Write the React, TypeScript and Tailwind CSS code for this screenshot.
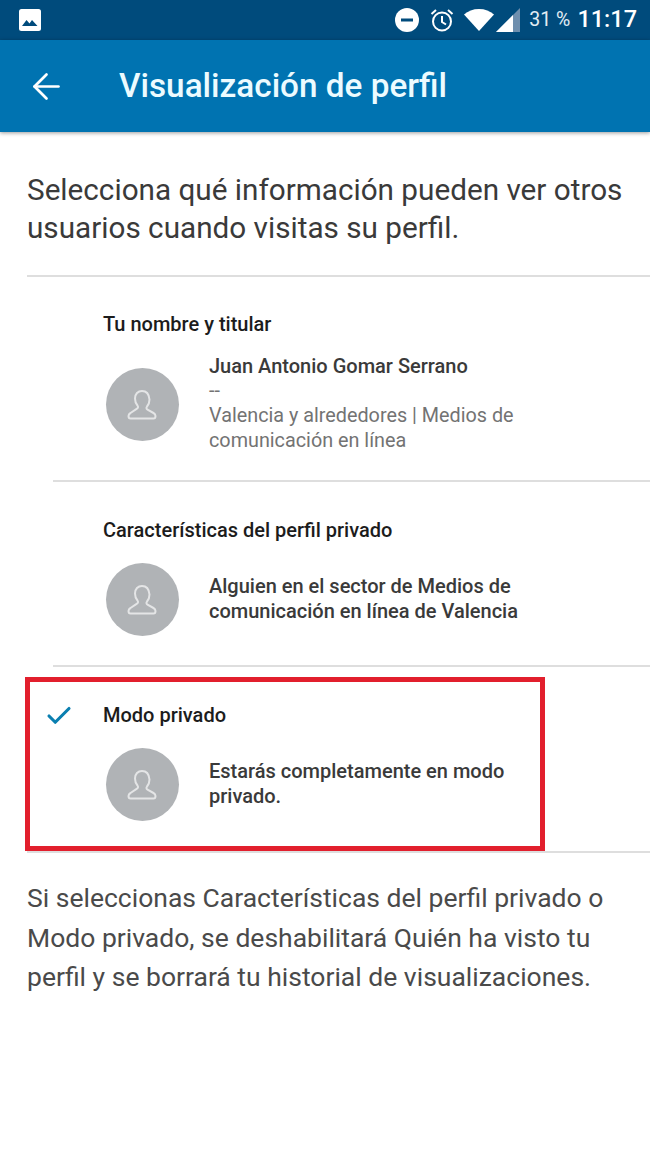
import { ArrowLeft, Check } from "lucide-react";

function Avatar() {
  return (
    <div className="flex h-[73px] w-[73px] shrink-0 items-center justify-center rounded-full bg-[#b0b3b6]">
      <svg width="32" height="32" viewBox="0 0 32 32" fill="none" stroke="#e4e5e6" strokeWidth="2" strokeLinejoin="round" className="-ml-[2px]">
        <path d="M16 2c-4 0-7 3-7 7.500 0 3 1.200 5.500 2.500 7 .8 1 .8 2.500-.5 3.200L4.500 24c-1.500.8-2 2-2 3 0 1.500.8 2.500 2 2.500h23c1.200 0 2-1 2-2.500 0-1-.5-2.200-2-3l-6-3.300c-1.300-.7-1.300-2.200-.5-3.200 1.300-1.500 2.500-4 2.500-7C23 5 20 2 16 2z" />
      </svg>
    </div>
  );
}

function StatusBar() {
  return (
    <div className="flex h-10 items-center justify-between bg-[#004b7c] pl-[19px] pr-[13px] text-white">
      <svg width="22" height="22" viewBox="0 0 22 22">
        <rect width="22" height="22" rx="2.500" fill="#fff" />
        <path d="M3 17l4.500-6 3 3.500 2.500-3.500 5.500 6z" fill="#004b7c" />
      </svg>
      <div className="flex items-center">
        <svg width="24" height="24" viewBox="0 0 24 24" className="mr-[11px]">
          <circle cx="12" cy="12" r="12" fill="#fff" />
          <rect x="6" y="10.500" width="12" height="3" fill="#004b7c" />
        </svg>
        <svg width="24" height="24" viewBox="0 0 24 24" fill="none" stroke="#fff" strokeWidth="2" className="mr-[10px]">
          <circle cx="12" cy="13.500" r="9" />
          <path d="M12 8v6l4 2.500M1.500 6L6 2M22.500 6L18 2" />
        </svg>
        <svg width="30" height="22" viewBox="0 0 30 22" className="mr-[2px]">
          <path d="M0 5.500C4 2 9 0 15 0s11 2 15 5.500L15 22z" fill="#fff" />
        </svg>
        <svg width="24" height="24" viewBox="0 0 24 24" className="mr-[9px]">
          <path d="M0 24L24 0v24z" fill="#6f8fae" />
          <path d="M0 24L17 7v17z" fill="#fff" />
        </svg>
        <span className="mr-[7px] text-[19.500px] text-[#e3edf4]">31 %</span>
        <span className="text-[23.500px] font-medium">11:17</span>
      </div>
    </div>
  );
}

export default function App() {
  return (
    <div className="h-[1156px] bg-white font-['Roboto',sans-serif] text-[#333]">
      <StatusBar />
      <div className="flex h-[92px] items-center bg-[#0073b1] pl-[26px] text-white shadow-[0_1px_4px_rgba(0,0,0,0.4)]">
        <ArrowLeft size={41} strokeWidth={1.600} />
        <h1 className="ml-[52px] text-[33.300px] font-medium text-[#ecfbff]">Visualización de perfil</h1>
      </div>

      <p className="px-[27px] pt-[39px] pb-[28px] text-[29.700px] leading-[38px] text-[#3a3a3a]">
        Selecciona qué información pueden ver otros usuarios cuando visitas su perfil.
      </p>

      <div className="ml-[27px] border-t-2 border-[#dedede]">
        <div className="h-[203px] pl-[76px] pt-[35px]">
          <h2 className="text-[20px] leading-[24px] font-medium text-[#1c1c1c]">Tu nombre y titular</h2>
          <div className="mt-[18px] flex">
            <div className="ml-[3px] mt-[14px]"><Avatar /></div>
            <div className="ml-[30px] text-[19.800px] leading-[25px] text-[#737373]">
              <div className="text-[20px] font-medium text-[#3a3a3a]">Juan Antonio Gomar Serrano</div>
              <div className="-mt-[1px]">--</div>
              <div className="w-[330px]">Valencia y alrededores | Medios de comunicación en línea</div>
            </div>
          </div>
        </div>

        <div className="ml-[26px] h-[185px] border-t-2 border-[#dedede] pl-[50px] pt-[36px]">
          <h2 className="text-[20px] leading-[24px] font-medium text-[#1c1c1c]">Características del perfil privado</h2>
          <div className="mt-[21px] flex items-center">
            <div className="ml-[3px]"><Avatar /></div>
            <div className="ml-[30px] w-[330px] pb-[2px] text-[20px] leading-[25px] font-medium text-[#3a3a3a]">
              Alguien en el sector de Medios de comunicación en línea de Valencia
            </div>
          </div>
        </div>

        <div className="relative ml-[26px] h-[186px] border-t-2 border-[#dedede] pl-[50px] pt-[36px]">
          <Check size={30} strokeWidth={2.500} className="absolute left-[-9px] top-[34px] text-[#0a7fb0]" />
          <h2 className="text-[20px] leading-[24px] font-medium text-[#1c1c1c]">Modo privado</h2>
          <div className="mt-[21px] flex items-center">
            <div className="ml-[3px]"><Avatar /></div>
            <div className="ml-[30px] w-[310px] pb-[1px] text-[20px] leading-[25px] font-medium text-[#3a3a3a]">
              Estarás completamente en modo privado.
            </div>
          </div>
          <div className="absolute left-[-28px] top-[10px] h-[174px] w-[520px] border-[5px] border-[#e21f2d]" />
        </div>
      </div>

      <p className="ml-[27px] border-t-2 border-[#dedede] pr-[40px] pt-[25px] text-[26.500px] leading-[39.500px] text-[#4a4a4a]">
        Si seleccionas Características del perfil privado o Modo privado, se deshabilitará Quién ha visto tu perfil y se borrará tu historial de visualizaciones.
      </p>
    </div>
  );
}
